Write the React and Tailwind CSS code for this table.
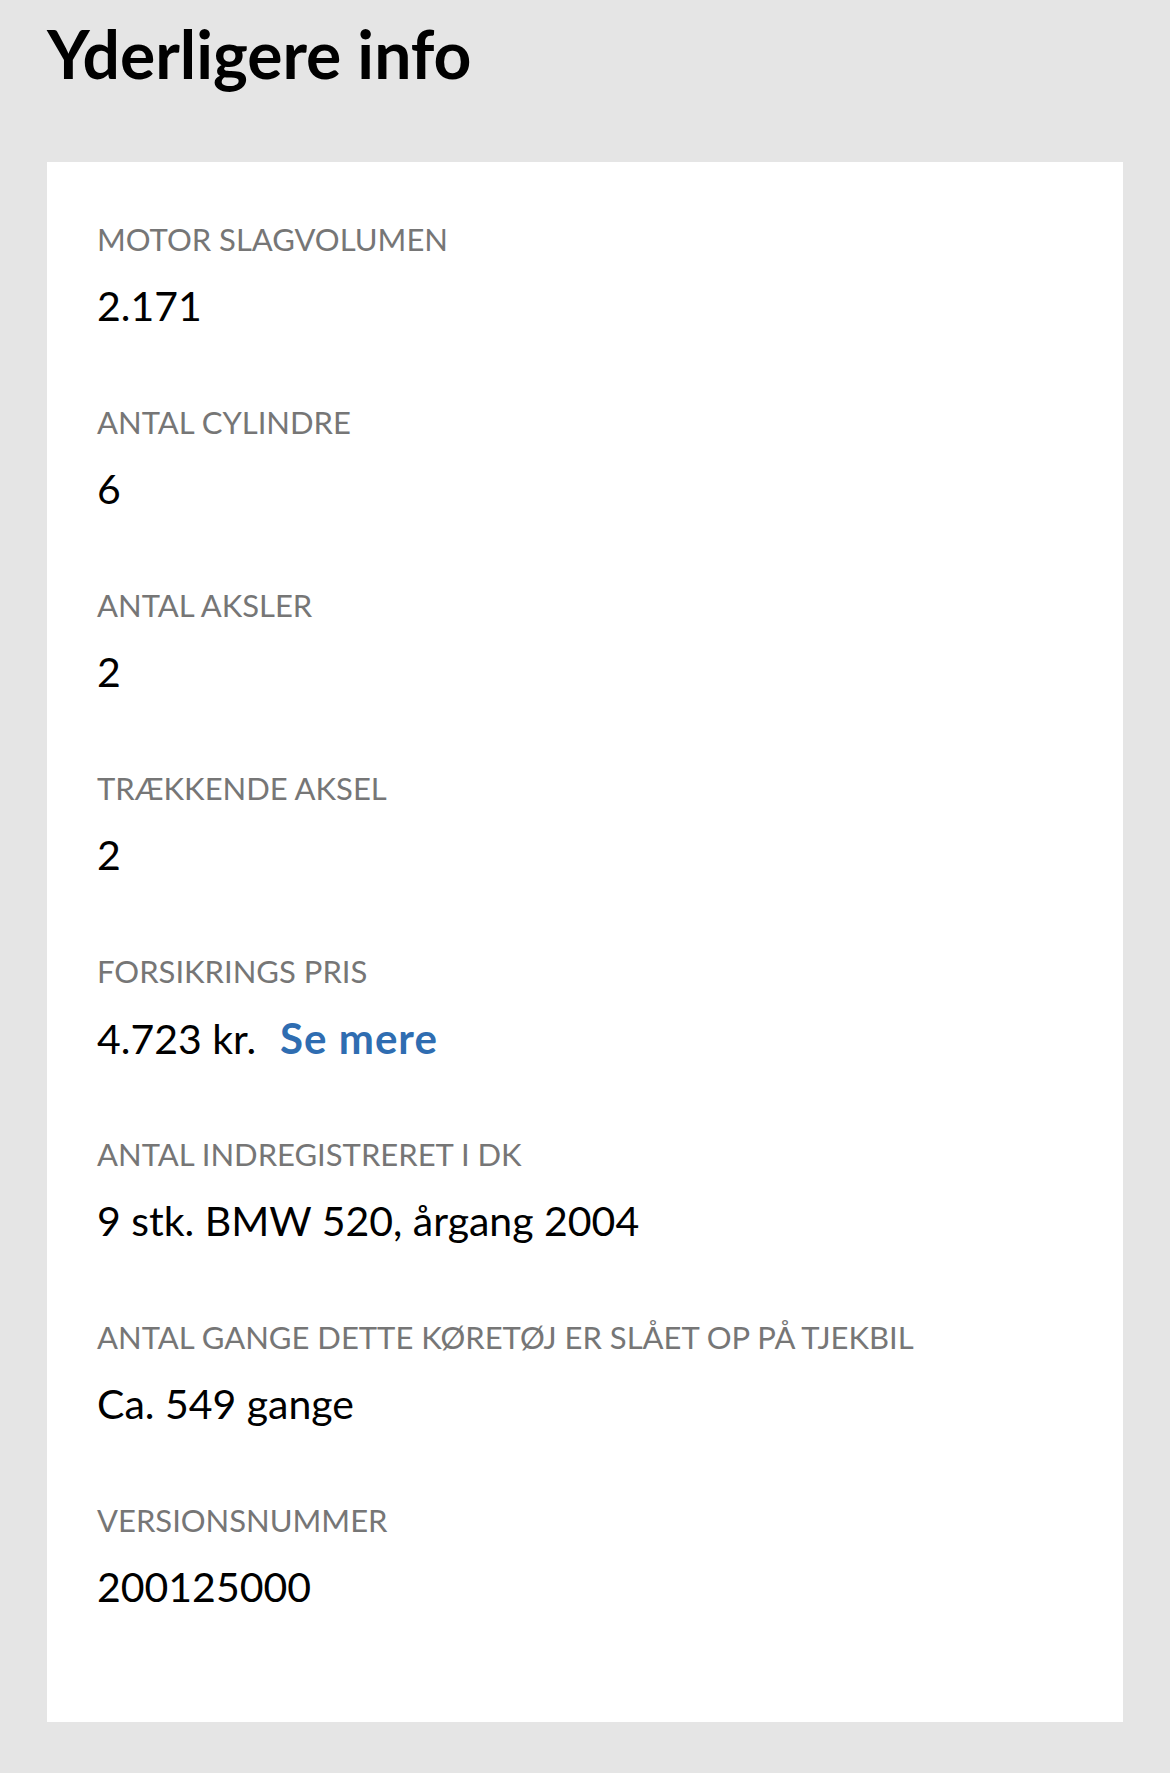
import React from 'react';

const rows = [
  { label: 'MOTOR SLAGVOLUMEN', value: '2.171' },
  { label: 'ANTAL CYLINDRE', value: '6' },
  { label: 'ANTAL AKSLER', value: '2' },
  { label: 'TRÆKKENDE AKSEL', value: '2' },
  { label: 'FORSIKRINGS PRIS', value: '4.723 kr.', link: 'Se mere' },
  { label: 'ANTAL INDREGISTRERET I DK', value: '9 stk. BMW 520, årgang 2004' },
  { label: 'ANTAL GANGE DETTE KØRETØJ ER SLÅET OP PÅ TJEKBIL', value: 'Ca. 549 gange' },
  { label: 'VERSIONSNUMMER', value: '200125000' },
];

const InfoRow = ({ label, value, link }) => (
  <div className="h-[183px]">
    <div className="text-[31px] leading-[36px] text-[#767676]">{label}</div>
    <div className="mt-[25px] flex items-baseline text-[41px] leading-[48px] text-black">
      <span>{value}</span>
      {link && (
        <a href="#" className="ml-[24px] text-[42px] tracking-[1px] font-bold text-[#2f6db1]">
          {link}
        </a>
      )}
    </div>
  </div>
);

const App = () => {
  return (
    <div className="min-h-screen bg-[#e5e5e5] px-[47px] pb-[51px] font-['Lato',sans-serif]">
      <h1 className="pt-[15px] mb-[70px] text-[66px] leading-[77px] font-bold text-black">
        Yderligere info
      </h1>
      <div className="bg-white px-[50px] pt-[59px] h-[1560px]">
        {rows.map((r) => (
          <InfoRow key={r.label} {...r} />
        ))}
      </div>
    </div>
  );
};

export default App;
